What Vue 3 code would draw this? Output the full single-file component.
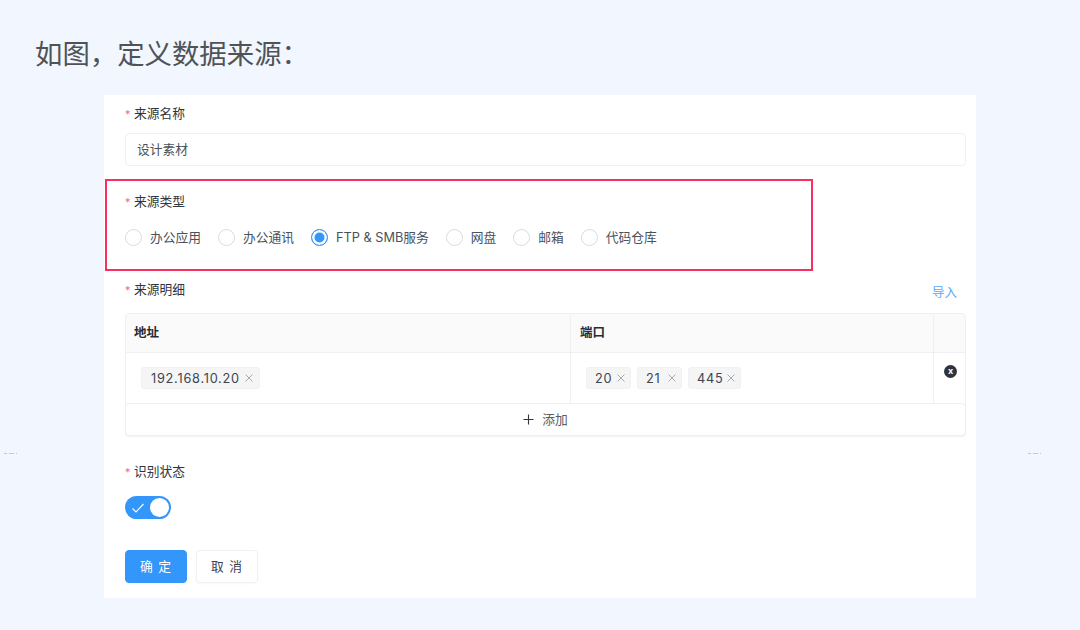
<script setup>
const radios = [
  { label: '办公应用' },
  { label: '办公通讯' },
  { label: 'FTP & SMB服务', on: true },
  { label: '网盘' },
  { label: '邮箱' },
  { label: '代码仓库' }
]
const ports = ['20', '21', '445']
</script>

<template>
  <div class="page">
    <h1 class="title">如图，定义数据来源：</h1>
    <form class="card" @submit.prevent>
      <div class="label"><i>*</i>来源名称</div>
      <div class="input">设计素材</div>

      <div class="label l2"><i>*</i>来源类型</div>
      <div class="radios">
        <div v-for="r in radios" :key="r.label" class="radio">
          <span class="dot" :class="{ on: r.on }"></span>
          <span class="radio-text">{{ r.label }}</span>
        </div>
      </div>

      <div class="label-row">
        <div class="label"><i>*</i>来源明细</div>
        <a class="link">导入</a>
      </div>
      <div class="table">
        <div class="cell head">地址</div>
        <div class="cell head port-head">端口</div>
        <div class="cell head"></div>
        <div class="cell body">
          <span class="tag">192.168.10.20<svg viewBox="0 0 10 10"><path d="M1.5 1.5l7 7M8.5 1.5l-7 7"/></svg></span>
        </div>
        <div class="cell body">
          <span v-for="p in ports" :key="p" class="tag port">{{ p }}<svg viewBox="0 0 10 10"><path d="M1.5 1.5l7 7M8.5 1.5l-7 7"/></svg></span>
        </div>
        <div class="cell body remove"><span class="close">x</span></div>
        <div class="add">
          <svg viewBox="0 0 12 12"><path d="M6 .5v11M.5 6h11"/></svg>
          <span class="add-text">添加</span>
        </div>
      </div>

      <div class="label l4"><i>*</i>识别状态</div>
      <div class="switch">
        <svg viewBox="0 0 14 12"><path d="M1.5 6.5l3.5 3.5 7.5-8"/></svg>
        <span class="knob"></span>
      </div>

      <div class="actions">
        <button type="button" class="btn primary">确 定</button>
        <button type="button" class="btn">取 消</button>
      </div>
    </form>

    <div class="highlight"></div>
    <div class="marks left"><b></b><b></b><b></b></div>
    <div class="marks right"><b></b><b></b><b></b></div>
  </div>
</template>

<style>
html, body { margin: 0; background: #f1f6ff; }
</style>

<style scoped>
.page {
  position: relative;
  width: 1080px;
  height: 630px;
  overflow: hidden;
  background: #f1f6ff;
  font-family: Inter, "Noto Sans CJK SC", sans-serif;
  font-size: 13px;
  color: #3d4550;
  box-sizing: border-box;
  padding-top: 34px;
}
.title {
  margin: 0 0 0 35px;
  height: 40px;
  line-height: 40px;
  font-size: 27.4px;
  font-weight: 400;
  color: #505356;
  letter-spacing: 0;
}
.card {
  margin: 21px 0 0 104px;
  width: 872px;
  height: 503px;
  box-sizing: border-box;
  padding: 8px 10px 0 21px;
  background: #fff;
}
.label {
  height: 20px;
  line-height: 22px;
  font-size: 12.75px;
  color: #2f3640;
}
.label i {
  display: inline-block;
  width: 9px;
  font-style: normal;
  font-size: 11px;
  color: #f56c7f;
}
.input {
  margin-top: 10px;
  height: 33px;
  line-height: 31px;
  box-sizing: border-box;
  padding-left: 11px;
  border: 1px solid #eef0f3;
  border-radius: 4px;
  color: #4a525c;
  font-size: 12.75px;
}
.l2 { margin-top: 25px; }
.radios {
  display: flex;
  gap: 17px;
  margin-top: 16px;
  height: 20px;
  align-items: center;
}
.radio {
  display: flex;
  align-items: center;
  gap: 8px;
  height: 20px;
  font-size: 12.75px;
  line-height: 20px;
  color: #4a525c;
}
.radio-text { margin-top: 1px; }
.dot {
  width: 17px;
  height: 17px;
  box-sizing: border-box;
  border: 1px solid #d8dbdf;
  border-radius: 50%;
  background: #fff;
}
.dot.on {
  border-color: #3296fa;
  box-shadow: inset 0 0 0 2.5px #fff;
  background: #3296fa;
}
.label-row {
  display: flex;
  justify-content: space-between;
  height: 20px;
  margin-top: 32px;
  padding-right: 9px;
}
.link {
  line-height: 26px;
  height: 20px;
  margin-top: 1px;
  font-size: 12.5px;
  color: #5aaafb;
}
.table {
  display: grid;
  grid-template-columns: 445px 363px 1fr;
  grid-template-rows: 39px 51px 31px;
  margin-top: 14px;
  height: 123px;
  box-sizing: border-box;
  border: 1px solid #f0f0f2;
  border-radius: 4px;
}
.cell { border-right: 1px solid #f0f0f2; box-sizing: border-box; }
.cell:nth-child(3n) { border-right: 0; }
.head {
  background: #fafafa;
  border-bottom: 1px solid #f0f0f2;
  padding-left: 8px;
  line-height: 37px;
  font-size: 12.5px;
  font-weight: 700;
  color: #262c33;
}
.port-head { padding-left: 9px; }
.head:first-child { border-top-left-radius: 4px; }
.head:nth-child(3) { border-top-right-radius: 4px; }
.body {
  display: flex;
  gap: 6px;
  padding: 14px 0 0 15px;
  align-items: flex-start;
}
.tag {
  display: flex;
  align-items: center;
  gap: 5px;
  height: 22px;
  box-sizing: border-box;
  padding: 0 5px 0 9px;
  background: #f5f5f6;
  border-radius: 3px;
  border: 1px solid #f1f1f3;
  font-size: 12.75px;
  letter-spacing: .75px;
  color: #3d4550;
}
.tag.port { padding: 0 4px 0 8px; gap: 3px; min-width: 45px; }
.tag svg { width: 10px; height: 10px; flex: none; margin-left: -1px; }
.tag.port svg { margin-left: auto; }
.tag path { stroke: #a6abb2; stroke-width: 1; fill: none; }
.remove { padding: 12px 0 0 10px; }
.close {
  display: block;
  width: 13px;
  height: 13px;
  border-radius: 50%;
  background: #2b3440;
  color: #fff;
  font-size: 9px;
  font-weight: 700;
  line-height: 12px;
  text-align: center;
}
.add {
  grid-column: 1 / -1;
  display: flex;
  align-items: center;
  justify-content: center;
  gap: 8px;
  margin: -1px -1px -1px;
  background: #fff;
  border-radius: 4px;
  border: 1px solid #f0f0f2;
  box-shadow: 0 1px 2px rgba(0, 0, 0, .05);
  font-size: 12.75px;
  color: #555c65;
}
.add svg { width: 11px; height: 11px; }
.add path { stroke: #2f3640; stroke-width: 1.2; fill: none; }
.add-text { margin-top: -2px; }
.l4 { margin-top: 26px; line-height: 20px; }
.switch {
  display: flex;
  align-items: center;
  justify-content: space-between;
  margin-top: 14px;
  width: 46px;
  height: 23px;
  box-sizing: border-box;
  padding: 0 2px 0 6px;
  border-radius: 12px;
  background: #3296fa;
}
.switch svg { width: 14px; height: 12px; }
.switch path { stroke: #fff; stroke-width: 1.1; fill: none; }
.knob {
  width: 19px;
  height: 19px;
  border-radius: 50%;
  background: #fff;
}
.actions {
  display: flex;
  gap: 9px;
  margin-top: 31px;
}
.btn {
  width: 62px;
  height: 33px;
  padding: 0 0 2px;
  border: 1px solid #f0f1f3;
  border-radius: 4px;
  background: #fff;
  font: inherit;
  font-size: 12.75px;
  letter-spacing: 1px;
  color: #3d4550;
  box-shadow: 0 1px 2px rgba(0, 0, 0, .03);
}
.btn.primary {
  background: #3296fa;
  border-color: #3296fa;
  color: #fff;
}
.highlight {
  position: absolute;
  left: 105px;
  top: 179px;
  width: 708px;
  height: 92px;
  box-sizing: border-box;
  border: 2px solid #f8305f;
}
.marks {
  position: absolute;
  top: 453px;
  display: flex;
  gap: 2px;
}
.marks.left { left: 4px; }
.marks.right { left: 1028px; }
.marks b { height: 1px; background: #c6cad0; width: 3px; }
.marks b:nth-child(2) { width: 5px; }
.marks b:nth-child(3) { width: 1px; }
</style>
